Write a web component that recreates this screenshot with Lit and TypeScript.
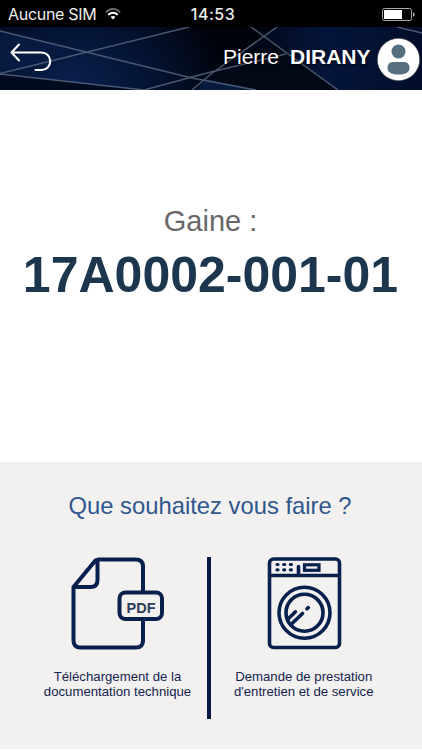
import { LitElement, html, css, svg } from "lit";
import { customElement } from "lit/decorators.js";

@customElement("status-bar")
class StatusBar extends LitElement {
  static styles = css`
    :host {
      display: grid;
      grid-template-columns: 1fr auto 1fr;
      align-items: center;
      height: 27px;
      box-sizing: border-box;
      padding: 1px 7px 0 8px;
      background: #000;
      color: #eee;
      font: 400 16px/26px Inter, "Liberation Sans", sans-serif;
    }
    .carrier { display: flex; align-items: center; gap: 9px; white-space: nowrap; letter-spacing: -0.3px; }
    .time { font-weight: 500; letter-spacing: 0.5px; padding-left: 3px; }
    .battery { justify-self: end; }
    svg { display: block; }
  `;
  render() {
    return html`
      <div class="carrier">
        <span>Aucune SIM</span>
        <svg width="16" height="12" viewBox="0 0 16 12" fill="none" stroke-width="1.9">
          <path d="M.8 4.200Q8-2.400 15.200 4.200" stroke="#666" />
          <path d="M3.200 6.800Q8 2.500 12.800 6.800" stroke="#fff" />
          <path d="M5.500 8.900Q8 6.900 10.500 8.900L8 11.600Z" fill="#fff" />
        </svg>
      </div>
      <span class="time">14:53</span>
      <svg class="battery" width="33" height="13" viewBox="0 0 33 13">
        <rect x=".5" y=".5" width="29" height="12" rx="2" fill="none" stroke="#aaa" />
        <rect x="2" y="2" width="18" height="9" fill="#fff" />
        <path d="M31 4.200q1.600.5 1.600 2.300T31 8.800z" fill="#bbb" />
      </svg>
    `;
  }
}

@customElement("user-header")
class UserHeader extends LitElement {
  static styles = css`
    :host {
      display: flex;
      position: relative;
      align-items: center;
      height: 63px;
      box-sizing: border-box;
      padding: 0 2px 0 10px;
      overflow: hidden;
      color: #fff;
      font: 21px/24px "Liberation Sans", Arial, sans-serif;
    }
    .backdrop { position: absolute; inset: 0; width: 100%; height: 100%; }
    .back, .name, .avatar { position: relative; }
    .back { margin-top: -2px; }
    .name {
      margin: -3px 6.500px 0 auto;
      display: flex;
      gap: 11px;
      text-shadow: 0 1px 2px #000;
    }
    .avatar { margin-top: 1px; }
  `;
  render() {
    return html`
      <svg class="backdrop" viewBox="0 0 422 63" preserveAspectRatio="none">
        <defs>
          <radialGradient id="glow" gradientUnits="userSpaceOnUse" cx="75" cy="60" r="150" gradientTransform="translate(0 12) scale(1 .7)">
            <stop offset="0" stop-color="#08204c" />
            <stop offset=".55" stop-color="#041230" />
            <stop offset="1" stop-color="#01030c" />
          </radialGradient>
          <linearGradient id="right" x1="0" x2="1">
            <stop offset="0" stop-color="#020a20" />
            <stop offset=".4" stop-color="#04153a" />
            <stop offset="1" stop-color="#020d2a" />
          </linearGradient>
          <linearGradient id="left" x1="0" x2="1">
            <stop offset="0" stop-color="#08204a" />
            <stop offset="1" stop-color="#061a42" />
          </linearGradient>
        </defs>
        <rect width="422" height="63" fill="url(#glow)" />
        <path d="M0 4L88 25 0 46Z" fill="url(#left)" opacity=".6" />
        <path d="M0 47L144 63H0Z" fill="#020a20" />
        <path d="M264 8L276 0H422V63H338Z" fill="url(#right)" />
        <path d="M211 46L264 8 338 63H211Z" fill="#020816" />
        <path d="M206 52L256 63H196Z" fill="#051a3c" />
        <g fill="none" stroke="#56657f" stroke-width="1.500" opacity=".85">
          <path d="M0 4L192 51 256 63" />
          <path d="M0 46.500L189 0" />
          <path d="M0 47L144 63L192 50 211 45 286 27" />
          <path d="M192 63L211 47 277 0" />
          <path d="M251 0L338 63" />
          <path d="M397 0L422 6" />
        </g>
      </svg>
      <svg class="back" width="42" height="29" viewBox="0 0 42 29" fill="none" stroke="#fff" stroke-width="2" stroke-linecap="round" stroke-linejoin="round">
        <path d="M9 1.500L1.500 9.500 9 17.500M1.500 9.500H31.500A8.700 8.700 0 0 1 31.500 27H25.500" />
      </svg>
      <div class="name"><span>Pierre</span><b>DIRANY</b></div>
      <svg class="avatar" width="43" height="43" viewBox="0 0 43 43">
        <circle cx="21.500" cy="21.500" r="21.200" fill="#fff" stroke="#444" stroke-width=".6" />
        <circle cx="21.500" cy="13.500" r="7" fill="#536f80" />
        <path d="M16 24H27C31 24 32.500 27 32.500 30C32.500 35 27 36.500 21.500 36.500S10.500 35 10.500 30C10.500 27 12 24 16 24Z" fill="#536f80" />
      </svg>
    `;
  }
}

const pdfIcon = svg`
  <svg width="94" height="94" viewBox="0 0 94 94" fill="none" stroke="#08204d" stroke-width="4" stroke-linejoin="round">
    <path d="M26.500 2.500H64.500Q72 2.500 72 9.500V35.500M72 62V83.500Q72 90.500 65 90.500H9.500Q2.500 90.500 2.500 83.500V30L24 4Q26.500 1.500 26.500 6V23Q26.500 30 19.500 30H2.500" />
    <rect x="48.500" y="35.500" width="42.500" height="26.500" rx="6" />
    <text x="70" y="56" text-anchor="middle" font-family="Liberation Sans, sans-serif" font-weight="700" font-size="14.500" fill="#2b3c5c" stroke="none">PDF</text>
  </svg>`;

const washerIcon = svg`
  <svg width="76" height="94" viewBox="0 0 76 94" fill="none" stroke="#08204d" stroke-width="3.600" stroke-linecap="round">
    <rect x="3.500" y="2" width="70" height="88.500" rx="4" />
    <path d="M4 18.500H73M32.500 9.500V17" />
    <rect x="38.500" y="7.800" width="14.500" height="5.500" stroke-width="3.200" />
    <path d="M11 7.500h1M17.700 7.500h1M24.400 7.500h1M11 12.800h1M17.700 12.800h1M24.400 12.800h1" stroke-width="3.200" />
    <circle cx="38.500" cy="55.700" r="25.500" />
    <circle cx="38.500" cy="55.700" r="18.500" />
    <path d="M22.500 61.500L29.500 54.800M25 67.500L36.500 56.500M41 51.800L42.300 50.600" />
  </svg>`;

@customElement("action-tile")
class ActionTile extends LitElement {
  static styles = css`
    :host {
      display: flex;
      flex-direction: column;
      align-items: center;
      color: #14234f;
      font: 13.200px/14.500px "Liberation Sans", Arial, sans-serif;
      text-align: center;
    }
    ::slotted(svg) { display: block; }
    .label { margin-top: 19px; }
  `;
  render() {
    return html`<slot></slot><div class="label"><slot name="label"></slot></div>`;
  }
}

@customElement("app-root")
class AppRoot extends LitElement {
  static styles = css`
    :host {
      display: flex;
      flex-direction: column;
      height: 750px;
      background: #fff;
      font-family: "Liberation Sans", Arial, sans-serif;
      text-align: center;
    }
    .item { height: 372px; box-sizing: border-box; padding-top: 114px; }
    .kind { font-size: 29px; line-height: 34px; color: #686868; padding-right: 1px; }
    .code { font-size: 50px; line-height: 58px; font-weight: 700; color: #1c364e; margin-top: 8px; white-space: nowrap; padding-right: 1px; }
    .actions { height: 287px; box-sizing: border-box; padding-top: 30px; background: #f2f1f0; }
    .question { font-size: 23.800px; line-height: 28px; color: #2f568d; padding-right: 2px; }
    .choices { display: grid; grid-template-columns: 207px 3.500px 1fr; margin-top: 37px; height: 162px; }
    .pdf { padding-left: 28px; }
    .service { padding-right: 25px; }
    .divider { background: #081a44; }
    .caption span { display: block; white-space: nowrap; }
  `;
  render() {
    return html`
      <status-bar></status-bar>
      <user-header></user-header>
      <section class="item">
        <div class="kind">Gaine :</div>
        <div class="code">17A0002-001-01</div>
      </section>
      <section class="actions">
        <div class="question">Que souhaitez vous faire ?</div>
        <div class="choices">
          <action-tile class="pdf">
            ${pdfIcon}
            <div slot="label" class="caption"><span>Téléchargement de la</span><span>documentation technique</span></div>
          </action-tile>
          <div class="divider"></div>
          <action-tile class="service">
            ${washerIcon}
            <div slot="label" class="caption"><span>Demande de prestation</span><span>d'entretien et de service</span></div>
          </action-tile>
        </div>
      </section>
    `;
  }
}
